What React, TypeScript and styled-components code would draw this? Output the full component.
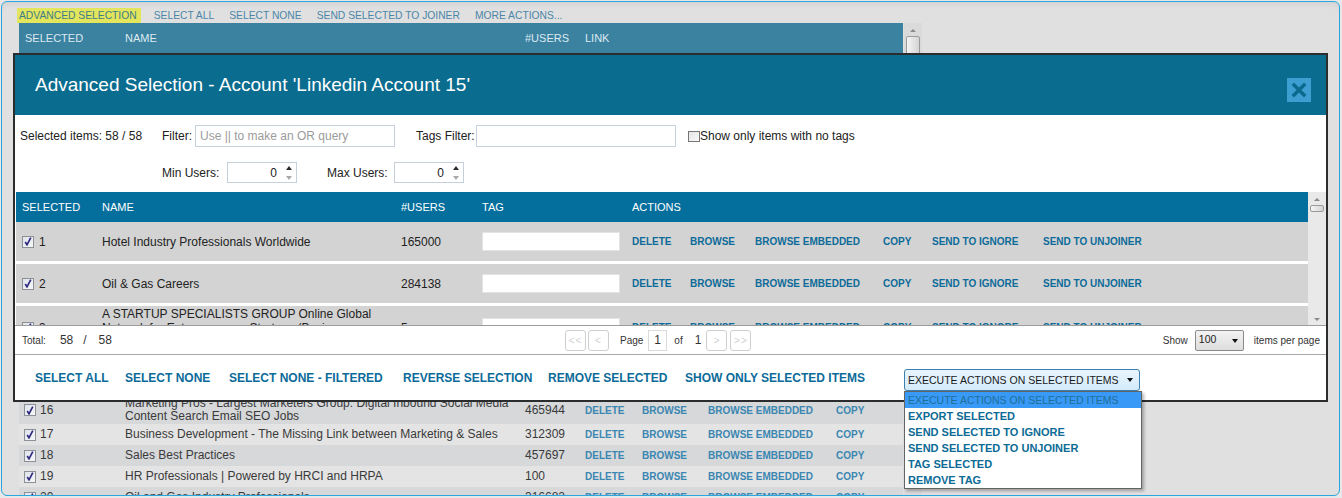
import React from "react";
import styled, { createGlobalStyle } from "styled-components";

const FONT = `"Liberation Sans", Arial, sans-serif`;

const GlobalStyle = createGlobalStyle`
  html, body { margin: 0; padding: 0; }
  body { background: #e8e8e8; font-family: ${FONT}; font-size: 12px; color: #222; }
  *, *::before, *::after { box-sizing: border-box; }
`;

type RowData = { n: number; name: string; users: string; tall?: boolean };

const rows: RowData[] = [
  { n: 1, name: "Hotel Industry Professionals Worldwide", users: "165000" },
  { n: 2, name: "Oil & Gas Careers", users: "284138" },
  { n: 3, name: "A STARTUP SPECIALISTS GROUP Online Global Network for Entrepreneurs, Startups (Business, Industry)", users: "5", tall: true },
  { n: 4, name: "Sales & Marketing Executives International", users: "98211" },
  { n: 5, name: "Digital Marketing", users: "512334" },
  { n: 6, name: "Project Manager Community", users: "287602" },
  { n: 7, name: "Global Supply Chain Management, Procurement, Logistics, Purchasing and Operations Professionals", users: "176540", tall: true },
  { n: 8, name: "Recruiting & Talent Acquisition Professionals", users: "203118" },
  { n: 9, name: "Social Media Marketing", users: "398876" },
  { n: 10, name: "Entrepreneur's Network: Small Business Owners, Startups, Investors, Angels and Venture Capital", users: "145309", tall: true },
  { n: 11, name: "Finance & Accounting Professionals", users: "129954" },
  { n: 12, name: "Hospitality Professionals Group", users: "88420" },
  { n: 13, name: "Information Technology Professionals Worldwide - IT Jobs, Cloud Computing, Cyber Security and Networking", users: "221087", tall: true },
  { n: 14, name: "Real Estate Investors Network", users: "167320" },
  { n: 15, name: "Human Resources Professionals Network", users: "255012" },
  { n: 16, name: "Marketing Pros - Largest Marketers Group: Digital Inbound Social Media Content Search Email SEO Jobs", users: "465944", tall: true },
  { n: 17, name: "Business Development - The Missing Link between Marketing & Sales", users: "312309" },
  { n: 18, name: "Sales Best Practices", users: "457697" },
  { n: 19, name: "HR Professionals | Powered by HRCI and HRPA", users: "100" },
  { n: 20, name: "Oil and Gas Industry Professionals", users: "316682" },
];

/* ---------- page frame ---------- */
const Screen = styled.div`
  position: relative;
  width: 1342px;
  height: 498px;
  padding: 1px;
  overflow: hidden;
`;

const Panel = styled.div`
  width: 1339px;
  height: 495px;
  border: 1px solid #2ba6de;
  border-radius: 6px;
  background: #e0e0e0;
  box-shadow: inset 0 6px 6px -4px rgba(0, 0, 0, 0.07);
  padding: 6px 0 0 15px;
  overflow: hidden;
`;

const Toolbar = styled.div`
  display: flex;
  align-items: center;
  gap: 11px;
  height: 15px;
`;

const ToolLink = styled.span<{ $active?: boolean }>`
  font-size: 10.3px;
  line-height: 15px;
  text-transform: uppercase;
  white-space: nowrap;
  padding: ${(p) => (p.$active ? "0 4px 0 2px" : "0 2px")};
  color: ${(p) => (p.$active ? "#3f7d86" : "#4b86a8")};
  background: ${(p) => (p.$active ? "#e3e55c" : "transparent")};
`;

/* ---------- background grid ---------- */
const BgArea = styled.div`
  display: flex;
  margin-left: 2px;
  height: 472px;
`;

const BgTable = styled.div`
  width: 884px;
  display: flex;
  flex-direction: column;
`;

const bgCols = "100px 400px 60px 1fr";

const BgHead = styled.div`
  display: grid;
  grid-template-columns: ${bgCols};
  align-items: center;
  height: 30px;
  flex-shrink: 0;
  background: #3b82a1;
  color: #dde9ef;
  font-size: 11px;
  text-transform: uppercase;
  & > span { padding-left: 6px; }
`;

const BgRow = styled.div<{ $tall?: boolean; $dark?: boolean }>`
  display: grid;
  grid-template-columns: ${bgCols};
  align-items: center;
  flex-shrink: 0;
  height: ${(p) => (p.$tall ? 28 : 21)}px;
  background: ${(p) => (p.$dark ? "#d6d8da" : "#e4e4e4")};
  color: #3a3a3a;
  font-size: 12px;
  line-height: 13px;
`;

const BgSel = styled.div`
  display: flex;
  align-items: center;
  gap: 4px;
  padding-left: 5px;
`;

const BgCell = styled.div`
  padding-left: 6px;
  padding-right: 4px;
`;

const BgActions = styled.div`
  display: grid;
  grid-template-columns: 57px 66px 128px auto;
  padding-left: 6px;
  font-size: 10px;
  font-weight: bold;
  color: #3b87b1;
  white-space: nowrap;
`;

const BgScroll = styled.div`
  width: 18px;
  margin-left: 1px;
  background: #dadada;
  display: flex;
  flex-direction: column;
  align-items: center;
`;

const ScrollArrow = styled.span<{ $down?: boolean }>`
  width: 0;
  height: 0;
  border-left: 3px solid transparent;
  border-right: 3px solid transparent;
  ${(p) => (p.$down ? "border-top: 3px solid #8a8a8a;" : "border-bottom: 3px solid #8a8a8a;")}
  margin: 6px 0 4px;
`;

const ScrollThumb = styled.span<{ $h: number }>`
  width: 14px;
  height: ${(p) => p.$h}px;
  border: 1px solid #9a9a9a;
  border-radius: 2px;
  background: linear-gradient(90deg, #f4f4f4, #d4d4d4);
`;

/* ---------- checkbox ---------- */
const CheckBox = styled.span`
  width: 12px;
  height: 12px;
  flex-shrink: 0;
  border: 1px solid #8d9095;
  background: linear-gradient(135deg, #dfe3ea, #f6f7f9);
  display: grid;
  place-items: center;
`;

const Check = () => (
  <CheckBox>
    <svg width="8" height="9" viewBox="0 0 8 9">
      <path d="M1.2 5 L3 7.8 L6.8 0.6" fill="none" stroke="#2f2b7e" strokeWidth="1.7" />
    </svg>
  </CheckBox>
);

/* ---------- modal ---------- */
const Modal = styled.div`
  position: absolute;
  left: 13px;
  top: 53px;
  width: 1315px;
  height: 349px;
  border: 2px solid #2a2c2d;
  background: #fff;
  display: flex;
  flex-direction: column;
`;

const ModalHeader = styled.div`
  height: 60px;
  flex-shrink: 0;
  background: #0a6c8f;
  display: flex;
  align-items: center;
  padding-left: 20px;
`;

const Title = styled.h1`
  margin: 0;
  font-size: 19px;
  font-weight: normal;
  color: #fff;
  letter-spacing: 0;
`;

const CloseButton = styled.button`
  margin-left: auto;
  margin-right: 15px;
  align-self: flex-start;
  margin-top: 23px;
  width: 24px;
  height: 24px;
  padding: 0;
  border: none;
  background: #3d9fd1;
  display: grid;
  place-items: center;
`;

const Filters = styled.div`
  height: 75px;
  flex-shrink: 0;
  padding: 10px 0 0 5px;
  font-size: 12px;
  color: #222;
`;

const FilterRow = styled.div`
  display: grid;
  grid-template-columns: 142px 33px 221px 60px 212px auto;
  align-items: center;
  height: 22px;
`;

const RangeRow = styled.div`
  display: grid;
  grid-template-columns: 65px 100px 67px 70px;
  align-items: center;
  height: 21px;
  margin-top: 15px;
  padding-left: 142px;
`;

const TextBox = styled.input`
  width: 200px;
  height: 22px;
  border: 1px solid #c6d0da;
  padding: 0 4px;
  font-family: ${FONT};
  font-size: 12px;
  color: #222;
  outline: none;
  &::placeholder { color: #9b9b9b; }
`;

const NumBox = styled.div`
  width: 70px;
  height: 21px;
  border: 1px solid #c6d0da;
  display: flex;
  align-items: center;
  justify-content: flex-end;
  padding-right: 4px;
`;

const NumValue = styled.span`
  font-size: 12px;
  margin-right: 8px;
`;

const Spinner = styled.span`
  display: flex;
  flex-direction: column;
  gap: 6px;
  width: 7px;
  align-items: center;
`;

const Tri = styled.span<{ $down?: boolean; $color: string }>`
  width: 0;
  height: 0;
  border-left: 3px solid transparent;
  border-right: 3px solid transparent;
  ${(p) => (p.$down ? `border-top: 4px solid ${p.$color};` : `border-bottom: 4px solid ${p.$color};`)}
`;

const NoTagLabel = styled.label`
  display: flex;
  align-items: center;
  font-size: 12px;
`;

const PlainBox = styled.span`
  width: 12px;
  height: 11px;
  border: 1px solid #767676;
  background: linear-gradient(135deg, #e4e4e4, #fafafa);
`;

/* ---------- modal table ---------- */
const TableArea = styled.div`
  display: flex;
  height: 133px;
  margin: 2px 0 0 1px;
  flex-shrink: 0;
  overflow: hidden;
`;

const TableMain = styled.div`
  flex: 1;
  display: flex;
  flex-direction: column;
  gap: 3px;
  overflow: hidden;
`;

const cols = "80px 299px 81px 150px 1fr";

const THead = styled.div`
  display: grid;
  grid-template-columns: ${cols};
  align-items: center;
  height: 30px;
  flex-shrink: 0;
  margin-bottom: -3px;
  background: #046e9c;
  color: #fff;
  font-size: 11px;
  & > span { padding-left: 6px; }
`;

const TRow = styled.div<{ $h: number }>`
  display: grid;
  grid-template-columns: ${cols};
  align-items: center;
  height: ${(p) => p.$h}px;
  flex-shrink: 0;
  background: #d3d3d3;
  font-size: 12px;
  color: #222;
  line-height: 14px;
`;

const SelCell = styled.div`
  display: flex;
  align-items: center;
  gap: 5px;
  padding-left: 6px;
`;

const Cell = styled.div<{ $top?: boolean }>`
  padding-left: 6px;
  padding-right: 6px;
  align-self: ${(p) => (p.$top ? "start" : "center")};
  padding-top: ${(p) => (p.$top ? "1px" : "0")};
`;

const TagBox = styled.input`
  width: 138px;
  height: 19px;
  border: 1px solid #e3e3e3;
  background: #fff;
  outline: none;
`;

const RowActions = styled.div`
  display: grid;
  grid-template-columns: 58px 65px 128px 49px 111px auto;
  padding-left: 6px;
  font-size: 10px;
  font-weight: bold;
  color: #0c6b99;
  white-space: nowrap;
`;

const TableScroll = styled.div`
  width: 18px;
  background: #e9e9e9;
  display: flex;
  flex-direction: column;
  align-items: center;
`;

const Spacer = styled.span`
  flex: 1;
`;

/* ---------- pager ---------- */
const Pager = styled.div`
  height: 30px;
  flex-shrink: 0;
  border-top: 1px solid #9c9c9c;
  border-bottom: 1px solid #a7a7a7;
  display: grid;
  grid-template-columns: 543px auto 1fr;
  align-items: center;
  padding: 0 6px 0 7px;
  font-size: 10px;
  color: #333;
`;

const PagerGroup = styled.div<{ $end?: boolean }>`
  display: flex;
  align-items: center;
  justify-self: ${(p) => (p.$end ? "end" : "start")};
`;

const PText = styled.span<{ $ml?: number; $size?: number }>`
  margin-left: ${(p) => p.$ml ?? 0}px;
  font-size: ${(p) => p.$size ?? 10}px;
  color: #333;
  white-space: nowrap;
`;

const PagerBtn = styled.span<{ $ml?: number }>`
  margin-left: ${(p) => p.$ml ?? 0}px;
  width: 21px;
  height: 21px;
  border: 1px solid #cfcfcf;
  border-radius: 3px;
  background: #fff;
  color: #d2d2d2;
  font-size: 10px;
  display: grid;
  place-items: center;
  letter-spacing: 1px;
`;

const PageBox = styled.span`
  margin-left: 5px;
  width: 19px;
  height: 21px;
  border: 1px solid #dadada;
  font-size: 12px;
  padding-left: 5px;
  line-height: 19px;
`;

const SizeSelect = styled.span`
  margin-left: 7px;
  width: 49px;
  height: 21px;
  border: 1px solid #8b8b8b;
  border-radius: 2px;
  background: linear-gradient(#f3f3f3, #dddddd);
  display: flex;
  align-items: flex-start;
  justify-content: space-between;
  padding: 2px 5px 0 3px;
  font-size: 10.5px;
  color: #222;
`;

/* ---------- bottom actions ---------- */
const ActionBar = styled.div`
  flex: 1;
  display: grid;
  grid-template-columns: 90px 104px 174px 145px 137px 219px auto;
  align-items: center;
  padding-left: 20px;
  font-size: 12px;
  font-weight: bold;
  color: #0c6b99;
  white-space: nowrap;
`;

const SelectWrap = styled.div`
  position: relative;
  align-self: start;
  margin-top: 14px;
  width: 236px;
  height: 22px;
`;

const ExecSelect = styled.div`
  height: 22px;
  border: 1px solid #3c7fb1;
  border-radius: 3px;
  background: linear-gradient(#e9f5fd, #d3ebfb);
  display: flex;
  align-items: center;
  justify-content: space-between;
  padding: 0 6px 0 3px;
  font-size: 10.5px;
  font-weight: normal;
  color: #1a1a1a;
`;

const Caret = styled.span`
  width: 0;
  height: 0;
  border-left: 3.5px solid transparent;
  border-right: 3.5px solid transparent;
  border-top: 4px solid #111;
`;

const DropList = styled.ul`
  position: absolute;
  top: 22px;
  left: 0;
  width: 238px;
  margin: 0;
  padding: 0;
  list-style: none;
  border: 1px solid #646464;
  background: #fff;
  box-shadow: 2px 2px 3px rgba(0, 0, 0, 0.3);
  z-index: 5;
`;

const DropItem = styled.li<{ $hl?: boolean }>`
  height: 16px;
  line-height: 16px;
  padding-left: 3px;
  font-size: ${(p) => (p.$hl ? 10.5 : 11)}px;
  font-weight: ${(p) => (p.$hl ? "normal" : "bold")};
  color: ${(p) => (p.$hl ? "#1f6f96" : "#0d6b95")};
  background: ${(p) => (p.$hl ? "#3899f6" : "transparent")};
  white-space: nowrap;
`;

const dropItems = [
  "EXECUTE ACTIONS ON SELECTED ITEMS",
  "EXPORT SELECTED",
  "SEND SELECTED TO IGNORE",
  "SEND SELECTED TO UNJOINER",
  "TAG SELECTED",
  "REMOVE TAG",
];

export default function App() {
  return (
    <>
      <GlobalStyle />
      <Screen>
        <Panel>
          <Toolbar>
            <ToolLink $active>Advanced Selection</ToolLink>
            <ToolLink>Select All</ToolLink>
            <ToolLink>Select None</ToolLink>
            <ToolLink>Send Selected to Joiner</ToolLink>
            <ToolLink>More Actions...</ToolLink>
          </Toolbar>
          <BgArea>
            <BgTable>
              <BgHead>
                <span>Selected</span>
                <span>Name</span>
                <span>#Users</span>
                <span>Link</span>
              </BgHead>
              {rows.map((r) => (
                <BgRow key={r.n} $tall={r.tall} $dark={r.n % 2 === 0}>
                  <BgSel>
                    <Check />
                    <span>{r.n}</span>
                  </BgSel>
                  <BgCell>{r.name}</BgCell>
                  <BgCell>{r.users}</BgCell>
                  <BgActions>
                    <span>DELETE</span>
                    <span>BROWSE</span>
                    <span>BROWSE EMBEDDED</span>
                    <span>COPY</span>
                  </BgActions>
                </BgRow>
              ))}
            </BgTable>
            <BgScroll>
              <ScrollArrow />
              <ScrollThumb $h={40} />
            </BgScroll>
          </BgArea>
        </Panel>

        <Modal>
          <ModalHeader>
            <Title>Advanced Selection - Account 'Linkedin Account 15'</Title>
            <CloseButton aria-label="Close">
              <svg width="16" height="16" viewBox="0 0 16 16">
                <path d="M3 3 L13 13 M13 3 L3 13" stroke="#0b6a8d" strokeWidth="3.4" strokeLinecap="square" />
              </svg>
            </CloseButton>
          </ModalHeader>

          <Filters>
            <FilterRow>
              <span>Selected items: 58 / 58</span>
              <span>Filter:</span>
              <TextBox placeholder="Use || to make an OR query" />
              <span>Tags Filter:</span>
              <TextBox />
              <NoTagLabel>
                <PlainBox />
                <span>Show only items with no tags</span>
              </NoTagLabel>
            </FilterRow>
            <RangeRow>
              <span>Min Users:</span>
              <NumBox>
                <NumValue>0</NumValue>
                <Spinner>
                  <Tri $color="#2b2b2b" />
                  <Tri $down $color="#a9a9a9" />
                </Spinner>
              </NumBox>
              <span>Max Users:</span>
              <NumBox>
                <NumValue>0</NumValue>
                <Spinner>
                  <Tri $color="#2b2b2b" />
                  <Tri $down $color="#a9a9a9" />
                </Spinner>
              </NumBox>
            </RangeRow>
          </Filters>

          <TableArea>
            <TableMain>
              <THead>
                <span>SELECTED</span>
                <span>NAME</span>
                <span>#USERS</span>
                <span>TAG</span>
                <span>ACTIONS</span>
              </THead>
              {rows.slice(0, 5).map((r) => (
                <TRow key={r.n} $h={r.tall ? 42 : 39}>
                  <SelCell>
                    <Check />
                    <span>{r.n}</span>
                  </SelCell>
                  <Cell $top={r.tall}>{r.name}</Cell>
                  <Cell>{r.users}</Cell>
                  <Cell>
                    <TagBox />
                  </Cell>
                  <RowActions>
                    <span>DELETE</span>
                    <span>BROWSE</span>
                    <span>BROWSE EMBEDDED</span>
                    <span>COPY</span>
                    <span>SEND TO IGNORE</span>
                    <span>SEND TO UNJOINER</span>
                  </RowActions>
                </TRow>
              ))}
            </TableMain>
            <TableScroll>
              <ScrollArrow />
              <ScrollThumb $h={7} />
              <Spacer />
              <ScrollArrow $down />
            </TableScroll>
          </TableArea>

          <Pager>
            <PagerGroup>
              <PText>Total:</PText>
              <PText $ml={14} $size={12}>58</PText>
              <PText $ml={10} $size={12}>/</PText>
              <PText $ml={12} $size={12}>58</PText>
            </PagerGroup>
            <PagerGroup>
              <PagerBtn>&lt;&lt;</PagerBtn>
              <PagerBtn $ml={2}>&lt;</PagerBtn>
              <PText $ml={11}>Page</PText>
              <PageBox>1</PageBox>
              <PText $ml={7}>of</PText>
              <PText $ml={12} $size={12}>1</PText>
              <PagerBtn $ml={5}>&gt;</PagerBtn>
              <PagerBtn $ml={3}>&gt;&gt;</PagerBtn>
            </PagerGroup>
            <PagerGroup $end>
              <PText>Show</PText>
              <SizeSelect>
                <span>100</span>
                <Caret style={{ marginTop: 6 }} />
              </SizeSelect>
              <PText $ml={10}>items per page</PText>
            </PagerGroup>
          </Pager>

          <ActionBar>
            <span>SELECT ALL</span>
            <span>SELECT NONE</span>
            <span>SELECT NONE - FILTERED</span>
            <span>REVERSE SELECTION</span>
            <span>REMOVE SELECTED</span>
            <span>SHOW ONLY SELECTED ITEMS</span>
            <SelectWrap>
              <ExecSelect>
                <span>EXECUTE ACTIONS ON SELECTED ITEMS</span>
                <Caret />
              </ExecSelect>
              <DropList>
                {dropItems.map((it, i) => (
                  <DropItem key={it} $hl={i === 0}>
                    {it}
                  </DropItem>
                ))}
              </DropList>
            </SelectWrap>
          </ActionBar>
        </Modal>
      </Screen>
    </>
  );
}
